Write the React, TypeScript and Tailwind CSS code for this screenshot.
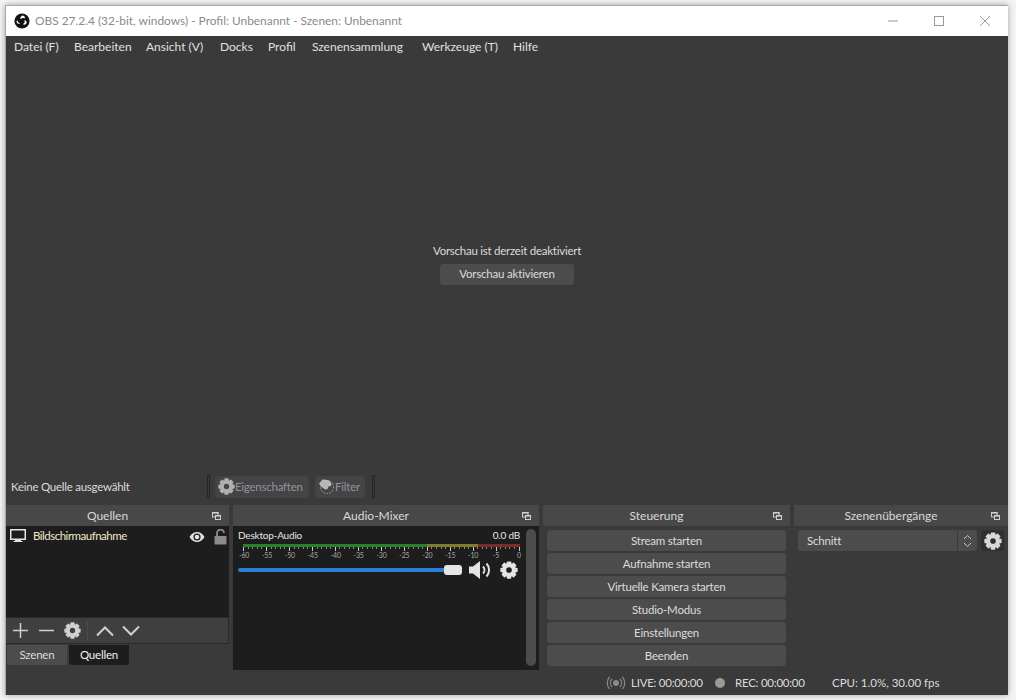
import React from "react";

const F = "font-['Lato','Noto_Sans',sans-serif]";

function Gear({ size = 16, color = "#d8d8d8" }: { size?: number; color?: string }) {
  const teeth = [0, 45, 90, 135, 180, 225, 270, 315];
  return (
    <svg width={size} height={size} viewBox="0 0 24 24" className="shrink-0">
      {teeth.map((a) => (
        <rect key={a} x="9" y="0.5" width="6" height="5.500" rx="1" fill={color} transform={`rotate(${a} 12 12)`} />
      ))}
      <circle cx="12" cy="12" r="6.500" fill="none" stroke={color} strokeWidth="5.500" />
    </svg>
  );
}

function FloatIcon() {
  return (
    <svg width="9" height="8" viewBox="0 0 9 8" className="shrink-0">
      <rect x="0.500" y="0.500" width="5.500" height="4.500" fill="none" stroke="#cfcfcf" />
      <rect x="0" y="0" width="6.500" height="1.600" fill="#cfcfcf" />
      <rect x="3" y="3" width="6" height="5" fill="#484848" />
      <rect x="3.500" y="3.500" width="5" height="4" fill="none" stroke="#cfcfcf" />
      <rect x="3" y="3" width="6" height="1.600" fill="#cfcfcf" />
    </svg>
  );
}

function DockHeader({ title }: { title: string }) {
  return (
    <div className="h-[21px] bg-[#484848] flex items-center pr-[8px] shrink-0">
      <div className="flex-1 text-center text-[12px] tracking-normal text-[#d8d8d8] pr-[3px] pt-[1px]">{title}</div>
      <FloatIcon />
    </div>
  );
}

const menus: [string, string][] = [
  ["Datei (F)", "w-[60px]"],
  ["Bearbeiten", "w-[72px]"],
  ["Ansicht (V)", "w-[74px]"],
  ["Docks", "w-[48px]"],
  ["Profil", "w-[44px]"],
  ["Szenensammlung", "w-[110px]"],
  ["Werkzeuge (T)", "w-[91px]"],
  ["Hilfe", "w-[40px]"],
];

const controls = ["Stream starten", "Aufnahme starten", "Virtuelle Kamera starten", "Studio-Modus", "Einstellungen", "Beenden"];
const labels = ["-60", "-55", "-50", "-45", "-40", "-35", "-30", "-25", "-20", "-15", "-10", "-5", "0"];

export default function App() {
  return (
    <div className={`${F} w-[1016px] h-[700px] bg-[#f4f4f4] pt-[5px] pl-[5px] pr-[8px] pb-[5px] overflow-hidden`}>
      <div className="w-full h-full border border-[#a9a9a9] border-b-0 border-r-0 flex flex-col bg-[#3a3a3a] shadow-[0_0_6px_rgba(0,0,0,0.35)] text-[11.500px] tracking-[-0.2px] text-[#dcdcdc]">
        {/* title bar */}
        <div className="h-[30px] bg-white flex items-center shrink-0">
          <svg width="16" height="16" viewBox="0 0 16 16" className="ml-[8px] mr-[5px] shrink-0">
            <circle cx="8" cy="8" r="7.600" fill="#111" />
            <path d="M8.200 2.600a3 3 0 0 1 2.900 2.700 4 4 0 0 0-4.600 1A3.200 3.200 0 0 1 8.200 2.600Z" fill="#fff" />
            <path d="M3.600 10.600a3 3 0 0 1-.5-3.900 4 4 0 0 0 3.200 3.500 3.200 3.200 0 0 1-2.700.4Z" fill="#fff" />
            <path d="M12.700 10a3 3 0 0 1-3.800 1.300 4 4 0 0 0 1.600-4.500 3.200 3.200 0 0 1 2.200 3.200Z" fill="#fff" />
          </svg>
          <span className="text-[#8a8a8a] text-[11.900px] tracking-normal whitespace-nowrap">OBS 27.2.4 (32-bit, windows) - Profil: Unbenannt - Szenen: Unbenannt</span>
          <div className="ml-auto flex items-center">
            <svg width="46" height="30" viewBox="0 0 46 30"><path d="M18 15h10" stroke="#999" /></svg>
            <svg width="46" height="30" viewBox="0 0 46 30"><rect x="18.500" y="10.500" width="9" height="9" fill="none" stroke="#999" /></svg>
            <svg width="46" height="30" viewBox="0 0 46 30"><path d="M18 10l10 10M28 10L18 20" stroke="#999" /></svg>
          </div>
        </div>
        {/* menu */}
        <div className="h-[21px] flex items-center shrink-0 pl-[8px] pt-[1px] text-[12px] tracking-normal text-[#e0e0e0]">
          {menus.map(([m, w]) => (
            <span key={m} className={`${w} whitespace-nowrap shrink-0`}>{m}</span>
          ))}
        </div>
        {/* preview */}
        <div className="flex-1 flex flex-col items-center justify-center pb-[8px]">
          <div className="h-[24px] leading-[22px] tracking-[-0.25px]">Vorschau ist derzeit deaktiviert</div>
          <div className="w-[134px] h-[21px] bg-[#4c4c4c] rounded-[3px] flex items-center justify-center">Vorschau aktivieren</div>
        </div>
        {/* context bar */}
        <div className="h-[23px] flex items-center shrink-0 mb-[7px]">
          <span className="w-[201px] pl-[5px] shrink-0 whitespace-nowrap tracking-[-0.25px]">Keine Quelle ausgewählt</span>
          <div className="w-[3px] h-[23px] border border-[#252525] bg-[#3a3a3a]" />
          <div className="ml-[5px] w-[94px] h-[22px] bg-[#444444] rounded-[3px] flex items-center pl-[3px] text-[#8f95a0] tracking-[-0.25px]">
            <Gear size={17} color="#b0b0b0" />
            <span>Eigenschaften</span>
          </div>
          <div className="ml-[6px] w-[50px] h-[22px] bg-[#444444] rounded-[3px] flex items-center pl-[3px] text-[#8f95a0]">
            <svg width="17" height="17" viewBox="0 0 17 17" className="shrink-0">
              <circle cx="9" cy="9" r="6.500" fill="none" stroke="#b0b0b0" strokeDasharray="1.500 1.500" />
              <path d="M1 5.500 4.500 1.500l6 .5 3 3.500-.5 2.500-2.500.5-1 2.500-2.500.5-4-3Z" fill="#b8b8b8" />
            </svg>
            <span>Filter</span>
          </div>
          <div className="ml-[7px] w-[3px] h-[23px] border border-[#252525] bg-[#3a3a3a]" />
        </div>
        {/* docks */}
        <div className="h-[165px] flex shrink-0 gap-[4px]">
          {/* Quellen */}
          <div className="w-[223px] flex flex-col shrink-0">
            <DockHeader title="Quellen" />
            <div className="h-[91px] bg-[#1d1d1d] flex items-start pt-[2px] pl-[4px]">
              <svg width="16" height="14" viewBox="0 0 16 14" className="shrink-0 mt-[1px]">
                <rect x="0.750" y="0.750" width="14.500" height="9.500" fill="none" stroke="#e4e4e4" strokeWidth="1.500" />
                <rect x="5" y="11" width="6" height="1.400" fill="#e4e4e4" />
                <rect x="3.500" y="12" width="9" height="1" fill="#e4e4e4" />
              </svg>
              <span className="ml-[7px] tracking-[-0.5px] text-[#eee9c4] leading-[16px] whitespace-nowrap">Bildschirmaufnahme</span>
              <div className="ml-auto flex items-center gap-[9px] pr-[2px] mt-[1px]">
                <svg width="16" height="12" viewBox="0 0 16 12">
                  <path d="M0.500 6C2.500 2.500 5 1 8 1s5.500 1.500 7.500 5c-2 3.500-4.500 5-7.500 5S2.500 9.500 0.500 6Z" fill="#e2e2e2" />
                  <circle cx="8" cy="6" r="3.600" fill="#1d1d1d" />
                  <circle cx="8" cy="6" r="2.300" fill="#e2e2e2" />
                </svg>
                <svg width="13" height="16" viewBox="0 0 13 16">
                  <path d="M3 7V4a3.500 3.500 0 0 1 7 0" fill="none" stroke="#8c8c8c" strokeWidth="1.800" />
                  <rect x="0.500" y="7" width="12" height="8.500" rx="0.800" fill="#8c8c8c" />
                </svg>
              </div>
            </div>
            <div className="h-[27px] bg-[#3f3f3f] border-y border-r border-[#2a2a2a] flex items-center pl-[6px] shrink-0">
              <svg width="17" height="17" viewBox="0 0 17 17"><path d="M8.500 1v15M1 8.500h15" stroke="#d0d0d0" strokeWidth="1.500" /></svg>
              <svg width="17" height="17" viewBox="0 0 17 17" className="ml-[9px]"><path d="M1 8.500h15" stroke="#d0d0d0" strokeWidth="1.500" /></svg>
              <div className="ml-[9px]"><Gear size={17} color="#d0d0d0" /></div>
              <div className="ml-[6px] w-px h-[20px] bg-[#4c4c4c]" />
              <svg width="18" height="12" viewBox="0 0 18 12" className="ml-[8px]"><path d="M1 10.500 9 2.500l8 8" fill="none" stroke="#d0d0d0" strokeWidth="2" /></svg>
              <svg width="18" height="12" viewBox="0 0 18 12" className="ml-[8px]"><path d="M1 1.500l8 8 8-8" fill="none" stroke="#d0d0d0" strokeWidth="2" /></svg>
            </div>
            <div className="flex pl-[1px] gap-[2px] mt-[1px]">
              <div className="w-[60px] h-[20px] bg-[#4c4c4c] rounded-b-[3px] flex items-center justify-center">Szenen</div>
              <div className="w-[60px] h-[20px] bg-[#1d1d1d] rounded-b-[3px] flex items-center justify-center text-[#f0f0f0]">Quellen</div>
            </div>
          </div>
          {/* Mixer */}
          <div className="w-[306px] flex flex-col shrink-0">
            <DockHeader title="Audio-Mixer" />
            <div className="flex-1 bg-[#1d1d1d] flex pl-[5px] pt-[2px]">
              <div className="w-[282px] shrink-0 flex flex-col">
                <div className="flex justify-between text-[10px] leading-[15px] text-[#e6e6e6]"><span>Desktop-Audio</span><span>0.0 dB</span></div>
                <div className="ml-[5px] w-[277px] h-[3px] mt-[1px] flex shrink-0">
                  <div className="w-[184px] bg-[#2a7d2a]" />
                  <div className="w-[51px] bg-[#7d7d2a]" />
                  <div className="w-[42px] bg-[#7d2a2a]" />
                </div>
                <div className="ml-[5px] w-[277px] flex justify-between h-[3px] shrink-0">
                  {Array.from({ length: 61 }).map((_, i) => (
                    <div key={i} className={i % 5 === 0 ? "w-px h-[4px] bg-[#c8c8c8]" : "w-px h-[2px] bg-[#8a8a8a]"} />
                  ))}
                </div>
                <div className="ml-[1px] w-[285px] flex justify-between text-[7px] leading-[9px] text-[#a8a8a8] mt-[1px]">
                  {labels.map((l) => (
                    <span key={l} className="w-[10px] text-center">{l}</span>
                  ))}
                </div>
                <div className="flex items-center h-[20px]">
                  <div className="w-[207px] h-[4px] bg-[#2b7fd8] rounded-l-[2px]" />
                  <div className="w-[18px] h-[10px] bg-[#e6e6e6] rounded-[3px] -ml-[1px]" />
                  <svg width="24" height="20" viewBox="0 0 24 20" className="ml-[6px]">
                    <path d="M1 6.500h4L12 1v18l-7-5.500H1Z" fill="#e4e4e4" />
                    <path d="M15 6.500a5 5 0 0 1 0 7M18.500 3.500a9.500 9.500 0 0 1 0 13" fill="none" stroke="#e4e4e4" strokeWidth="2" />
                  </svg>
                  <div className="ml-[8px]"><Gear size={18} color="#e4e4e4" /></div>
                </div>
              </div>
              <div className="ml-[6px] w-[10px] h-[137px] mt-[1px] bg-[#4c4c4c] rounded-[5px]" />
            </div>
          </div>
          {/* Steuerung */}
          <div className="w-[247px] flex flex-col shrink-0">
            <DockHeader title="Steuerung" />
            <div className="flex flex-col gap-[2px] px-[4px] pt-[4px]">
              {controls.map((c) => (
                <div key={c} className="h-[21px] bg-[#4c4c4c] rounded-[3px] flex items-center justify-center">{c}</div>
              ))}
            </div>
          </div>
          {/* Transitions */}
          <div className="flex-1 flex flex-col">
            <DockHeader title="Szenenübergänge" />
            <div className="flex items-center px-[4px] pt-[4px]">
              <div className="w-[179px] h-[21px] bg-[#4c4c4c] rounded-[3px] flex items-center pl-[9px]">
                <span className="flex-1">Schnitt</span>
                <div className="w-[20px] h-full border-l border-[#3a3a3a] flex items-center justify-center">
                  <svg width="9" height="14" viewBox="0 0 9 14"><path d="M1 5l3.500-3.500L8 5M1 9l3.500 3.500L8 9" fill="none" stroke="#c8c8c8" /></svg>
                </div>
              </div>
              <div className="ml-[4px] w-[23px] h-[21px] bg-[#2f2f2f] rounded-[3px] flex items-center justify-center"><Gear size={18} color="#d8d8d8" /></div>
            </div>
          </div>
        </div>
        {/* status */}
        <div className="h-[25px] flex items-center shrink-0 pl-[600px] pt-[1px] tracking-[-0.25px]">
          <svg width="20" height="14" viewBox="0 0 20 14" className="shrink-0">
            <circle cx="10" cy="7" r="3" fill="#8a8a8a" />
            <path d="M6 3a6 6 0 0 0 0 8M14 3a6 6 0 0 1 0 8M3.500 1a9 9 0 0 0 0 12M16.500 1a9 9 0 0 1 0 12" fill="none" stroke="#8a8a8a" strokeWidth="1.200" />
          </svg>
          <span className="ml-[5px] w-[72px] whitespace-nowrap">LIVE: 00:00:00</span>
          <div className="ml-[12px] w-[10px] h-[10px] rounded-full bg-[#9a9a9a] shrink-0" />
          <span className="ml-[10px] w-[71px] whitespace-nowrap">REC: 00:00:00</span>
          <span className="ml-[26px] whitespace-nowrap tracking-normal">CPU: 1.0%, 30.00 fps</span>
        </div>
      </div>
    </div>
  );
}
